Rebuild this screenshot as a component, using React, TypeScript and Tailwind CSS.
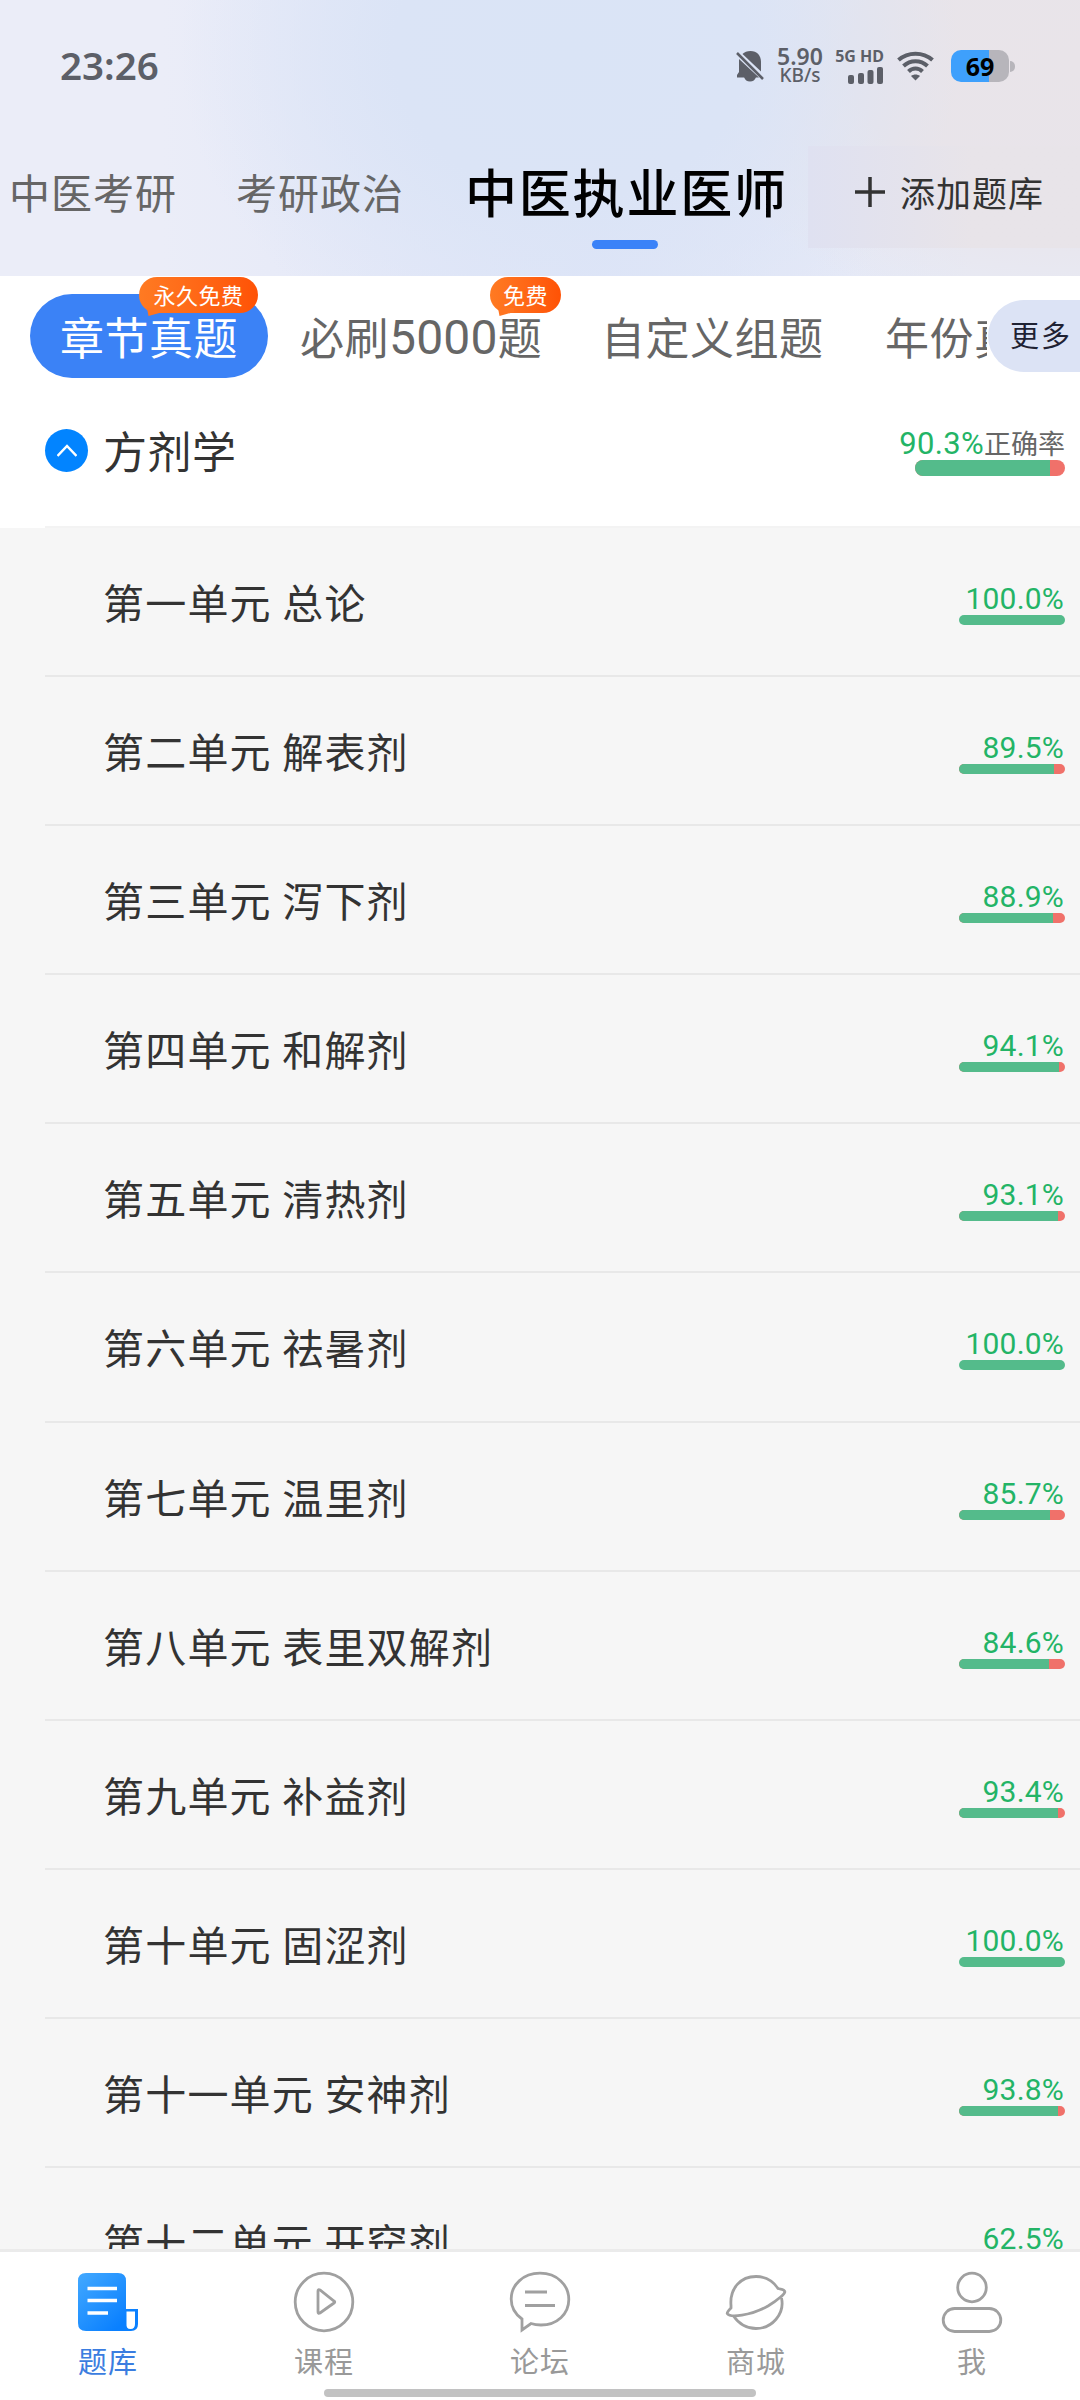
import { clsx } from "clsx"

const units = [
  { name: "第一单元 总论", rate: 100 },
  { name: "第二单元 解表剂", rate: 89.5 },
  { name: "第三单元 泻下剂", rate: 88.9 },
  { name: "第四单元 和解剂", rate: 94.1 },
  { name: "第五单元 清热剂", rate: 93.1 },
  { name: "第六单元 祛暑剂", rate: 100 },
  { name: "第七单元 温里剂", rate: 85.7 },
  { name: "第八单元 表里双解剂", rate: 84.6 },
  { name: "第九单元 补益剂", rate: 93.4 },
  { name: "第十单元 固涩剂", rate: 100 },
  { name: "第十一单元 安神剂", rate: 93.8 },
  { name: "第十二单元 开窍剂", rate: 62.5 },
]

function StatusBar() {
  return (
    <div className="flex h-[132px] items-center justify-between pl-[60px] pr-[65px] font-['Noto_Sans',sans-serif] text-[#5c5f68]">
      <span className="mt-[-2px] text-[38.500px] leading-none font-semibold">23:26</span>
      <div className="flex items-center">
        <svg width="28" height="32" viewBox="0 0 28 32" fill="currentColor">
          <path d="M6.500 4C8.500 2 11 1 14.500 1C21 1 25 5.500 25 12V21.500L6.500 4Z" />
          <path d="M3 9L23 27.500H1V25L3 22V9Z" />
          <path d="M8 27H20C19 30 17 31.500 14 31.500S9 30 8 27Z" />
          <path d="M1 3L27 29" stroke="currentColor" strokeWidth="2.500" />
        </svg>
        <div className="ml-[13px] flex w-[46px] flex-col items-center">
          <span className="text-[23px] leading-[19px] font-semibold">5.90</span>
          <span className="text-[19px] leading-[19px] font-medium">KB/s</span>
        </div>
        <div className="ml-[11px] flex w-[50px] flex-col items-end gap-[3px]">
          <span className="text-[16px] leading-[15px] font-bold whitespace-nowrap">5G HD</span>
          <svg width="36" height="17" viewBox="0 0 36 17" fill="currentColor">
            <rect x="0" y="8" width="6" height="9" rx="2" />
            <rect x="10" y="6" width="6" height="11" rx="2" />
            <rect x="19.500" y="3" width="6" height="14" rx="2" />
            <rect x="29" y="0" width="6" height="17" rx="2" />
          </svg>
        </div>
        <svg className="ml-[13px]" width="37" height="30" viewBox="0 0 37 30" fill="none" stroke="currentColor" strokeWidth="4">
          <path d="M1.500 9C11 0.500 26 0.500 35.500 9" />
          <path d="M6.500 15C13.500 8.500 23.500 8.500 30.500 15" />
          <path d="M11.500 20.500C15.500 16.500 21.500 16.500 25.500 20.500" />
          <path d="M14 25L18.500 29.500L23 25C20.500 23 16.500 23 14 25Z" fill="currentColor" stroke="none" />
        </svg>
        <div className="ml-[17px] flex items-center gap-[1px]">
          <div className="flex h-[32px] w-[58px] items-center justify-center rounded-[10px] bg-linear-to-r from-[#3ea0fc] from-66% to-[#b7b5bb] to-66%">
            <span className="text-[25px] leading-none font-bold text-black">69</span>
          </div>
          <div className="h-[11px] w-[5px] rounded-r-full bg-[#b7b5bb]" />
        </div>
      </div>
    </div>
  )
}

function SubjectTabs() {
  return (
    <div className="flex h-[144px] items-start whitespace-nowrap">
      <div className="flex h-[118px] w-[808px] shrink-0 items-center pl-[9px] text-[41px] tracking-[1px] text-[#666]">
        <span>中医考研</span>
        <span className="ml-[59px]">考研政治</span>
        <div className="relative ml-[61px] text-[52px] font-medium tracking-[1.8px] text-black">
          中医执业医师
          <div className="absolute bottom-[-32px] left-[127px] h-[9px] w-[66px] rounded-full bg-[#3a82f8]" />
        </div>
      </div>
      <div className="mt-[14px] flex h-[102px] flex-1 items-center bg-linear-to-r from-[#dfe1f1] to-[#e8e4e9] to-60% pl-[47px]">
        <svg className="mt-[-10px]" width="30" height="30" viewBox="0 0 30 30" stroke="#333" strokeWidth="3.500">
          <path d="M0 15H30M15 0V30" />
        </svg>
        <span className="mt-[-11px] ml-[15px] text-[35px] tracking-[1px] text-[#333]">添加题库</span>
      </div>
    </div>
  )
}

function Badge({ text, className }: { text: string; className: string }) {
  return (
    <div className={clsx("absolute", className)}>
      <div className="flex h-[36px] items-center justify-center rounded-full bg-linear-to-r from-[#ff7a22] to-[#ff5205] pb-[3px] text-[22px] tracking-[0.500px] text-white">
        {text}
      </div>
      <svg className="absolute top-[31px] left-[8px]" width="16" height="9" viewBox="0 0 16 9" fill="#ff7420">
        <path d="M0 0L1.500 8L16 4V0Z" />
      </svg>
    </div>
  )
}

function ModeTabs() {
  return (
    <div className="relative flex h-[120px] items-start overflow-hidden pt-[18px] pl-[30px] text-[44px] tracking-[0.500px] whitespace-nowrap text-[#666]">
      <div className="flex h-[84px] w-[238px] shrink-0 items-center justify-center rounded-full bg-[#3b82f6] pb-[1px] text-white">章节真题</div>
      <div className="ml-[32px] flex h-[83px] w-[301px] shrink-0 items-center">
        必刷<span className="pt-[4px] font-['Roboto'] text-[48px] tracking-[0.200px]">5000</span>题
      </div>
      <div className="flex h-[83px] w-[284px] shrink-0 items-center">自定义组题</div>
      <div className="flex h-[83px] w-[102px] shrink-0 items-center overflow-hidden">年份真题</div>
      <div className="absolute top-[24px] right-0 flex h-[72px] w-[92px] items-center rounded-l-full bg-[#dce3f5] pb-[3px] pl-[22px] text-[29px] tracking-[2px] text-[#1f2233]">更多</div>
      <Badge text="永久免费" className="top-[1px] left-[139px] w-[119px]" />
      <Badge text="免费" className="top-[1px] left-[490px] w-[71px]" />
    </div>
  )
}

function RateBar({ rate, className }: { rate: number; className: string }) {
  return (
    <div className={clsx("overflow-hidden rounded-full bg-[#f0716a]", className)}>
      <div className="h-full bg-[#54bb8b]" style={{ width: `${rate}%` }} />
    </div>
  )
}

function ChapterHeader() {
  return (
    <>
      <div className="flex h-[130px] justify-between pr-[15px] pl-[45px]">
        <div className="flex h-[108px] items-center">
          <div className="flex size-[43px] items-center justify-center rounded-full bg-[#0284ff]">
            <svg width="20" height="13" viewBox="0 0 20 13" fill="none" stroke="white" strokeWidth="2.500">
              <path d="M0.500 12L10 2L19.500 12" />
            </svg>
          </div>
          <span className="ml-[15px] text-[44px] tracking-[0.500px] text-[#333]">方剂学</span>
        </div>
        <div className="flex flex-col items-end pt-[32px]">
          <div className="flex h-[32px] items-center pb-[4px] text-[27px] text-[#666]">
            <span className="pt-[2px] font-['Roboto'] text-[31px] tracking-[0.300px] text-[#23b466]">90.3%</span>正确率
          </div>
          <RateBar rate={90.3} className="h-[16px] w-[150px]" />
        </div>
      </div>
      <div className="ml-[45px] h-[2px] bg-[#f3f3f3]" />
    </>
  )
}

function UnitRow({ name, rate }: { name: string; rate: number }) {
  return (
    <li className="ml-[45px] flex h-[149.100px] shrink-0 justify-between border-b-2 border-[#e8e8e8] pr-[15px] pl-[58px]">
      <span className="flex h-[147px] items-center text-[41px] tracking-[1.200px] text-[#333]">{name}</span>
      <div className="flex flex-col items-end pt-[54px]">
        <span className="h-[33px] pt-[1px] pr-[1px] font-['Roboto'] text-[30px] leading-[32px] tracking-[0.200px] text-[#23b466]">{rate.toFixed(1)}%</span>
        <RateBar rate={rate} className="h-[10px] w-[106px]" />
      </div>
    </li>
  )
}

const navItems = [
  {
    label: "题库",
    icon: (
      <>
        <defs>
          <linearGradient id="doc" x1="0" y1="0" x2="1" y2="1">
            <stop stopColor="#43a9ff" />
            <stop offset="0.800" stopColor="#0a80ff" />
          </linearGradient>
        </defs>
        <path d="M8 1H40Q48 1 48 9V37H60V52Q60 59 53 59H8Q0 59 0 51V9Q0 1 8 1Z" fill="url(#doc)" stroke="none" />
        <path d="M48.500 39.500H57V52Q57 57 52.500 57T48.500 52Z" fill="white" stroke="none" />
        <path d="M9.500 16.500H39M9.500 28.500H39M9.500 41H30" stroke="white" strokeWidth="3.500" />
      </>
    ),
  },
  {
    label: "课程",
    icon: (
      <>
        <circle cx="30" cy="30" r="28.800" />
        <path d="M24 19V40Q24 42 26 41L40 31Q41.500 30 40 29L26 18Q24 17 24 19Z" />
      </>
    ),
  },
  {
    label: "论坛",
    icon: (
      <>
        <path d="M12 47V58L21 51.500C24 52.500 27 53 31 53C47 53 58.800 42 58.800 27.500S47 1.200 30 1.200S1.200 13 1.200 27C1.200 35 5 42 12 47Z" />
        <path d="M15 20H37M15 33.500H45" />
      </>
    ),
  },
  {
    label: "商城",
    icon: (
      <>
        <path d="M52 16.500C47 9 39 4.500 30 4.500C15 4.500 3.500 16 5 33.500V36C3 38 1 40 1.200 41.500C4 46 24 44 42 34C52 28 60 21 58.800 19.500C58 17 55 17.500 52 16.500Z" />
        <path d="M7.500 44C13 52 21 56.500 30 56.500C46 56.500 59 42 55.500 26" />
      </>
    ),
  },
  {
    label: "我",
    icon: (
      <>
        <circle cx="30" cy="15.500" r="14.300" />
        <rect x="1.200" y="36.500" width="57.600" height="23" rx="11.500" />
      </>
    ),
  },
]

function BottomNav() {
  return (
    <nav className="h-[151px] shrink-0 border-t-3 border-[#ebebeb] bg-white">
      <div className="grid h-[137px] grid-cols-5">
        {navItems.map((item, i) => (
          <div key={item.label} className={clsx("flex flex-col items-center pt-[20px] text-[29px]", i === 0 ? "text-[#3b7de0]" : "text-[#999]")}>
            <svg className="overflow-visible" width="60" height="60" viewBox="0 0 60 60" fill="none" stroke="#a0a0a0" strokeWidth="2.800">
              {item.icon}
            </svg>
            <span className="mt-[7px] leading-[42px] tracking-[1px]">{item.label}</span>
          </div>
        ))}
      </div>
      <div className="mx-auto h-[8px] w-[432px] rounded-full bg-[#c2c2c2]" />
    </nav>
  )
}

export default function App() {
  return (
    <div className="flex h-[2400px] w-[1080px] flex-col overflow-hidden bg-white font-['Noto_Sans_CJK_SC',sans-serif] leading-none">
      {/* Header */}
      <header className="h-[276px] shrink-0 bg-[radial-gradient(ellipse_390px_330px_at_570px_50px,#dae4f6_0%,#dbe4f6_45%,#dfe5f800_100%),radial-gradient(ellipse_420px_260px_at_1080px_60px,#e9e4e9_0%,#e8e4ea_55%,#e8e6f000_100%),linear-gradient(to_right,#ebedf8_15%,#dfe5f8_55%,#e8ebf6_90%)]">
        <StatusBar />
        <SubjectTabs />
      </header>

      <ModeTabs />
      <ChapterHeader />

      {/* Units */}
      <ul className="flex min-h-0 flex-1 flex-col overflow-hidden bg-[#f6f6f6]">
        {units.map((unit) => (
          <UnitRow key={unit.name} name={unit.name} rate={unit.rate} />
        ))}
      </ul>

      <BottomNav />
    </div>
  )
}
